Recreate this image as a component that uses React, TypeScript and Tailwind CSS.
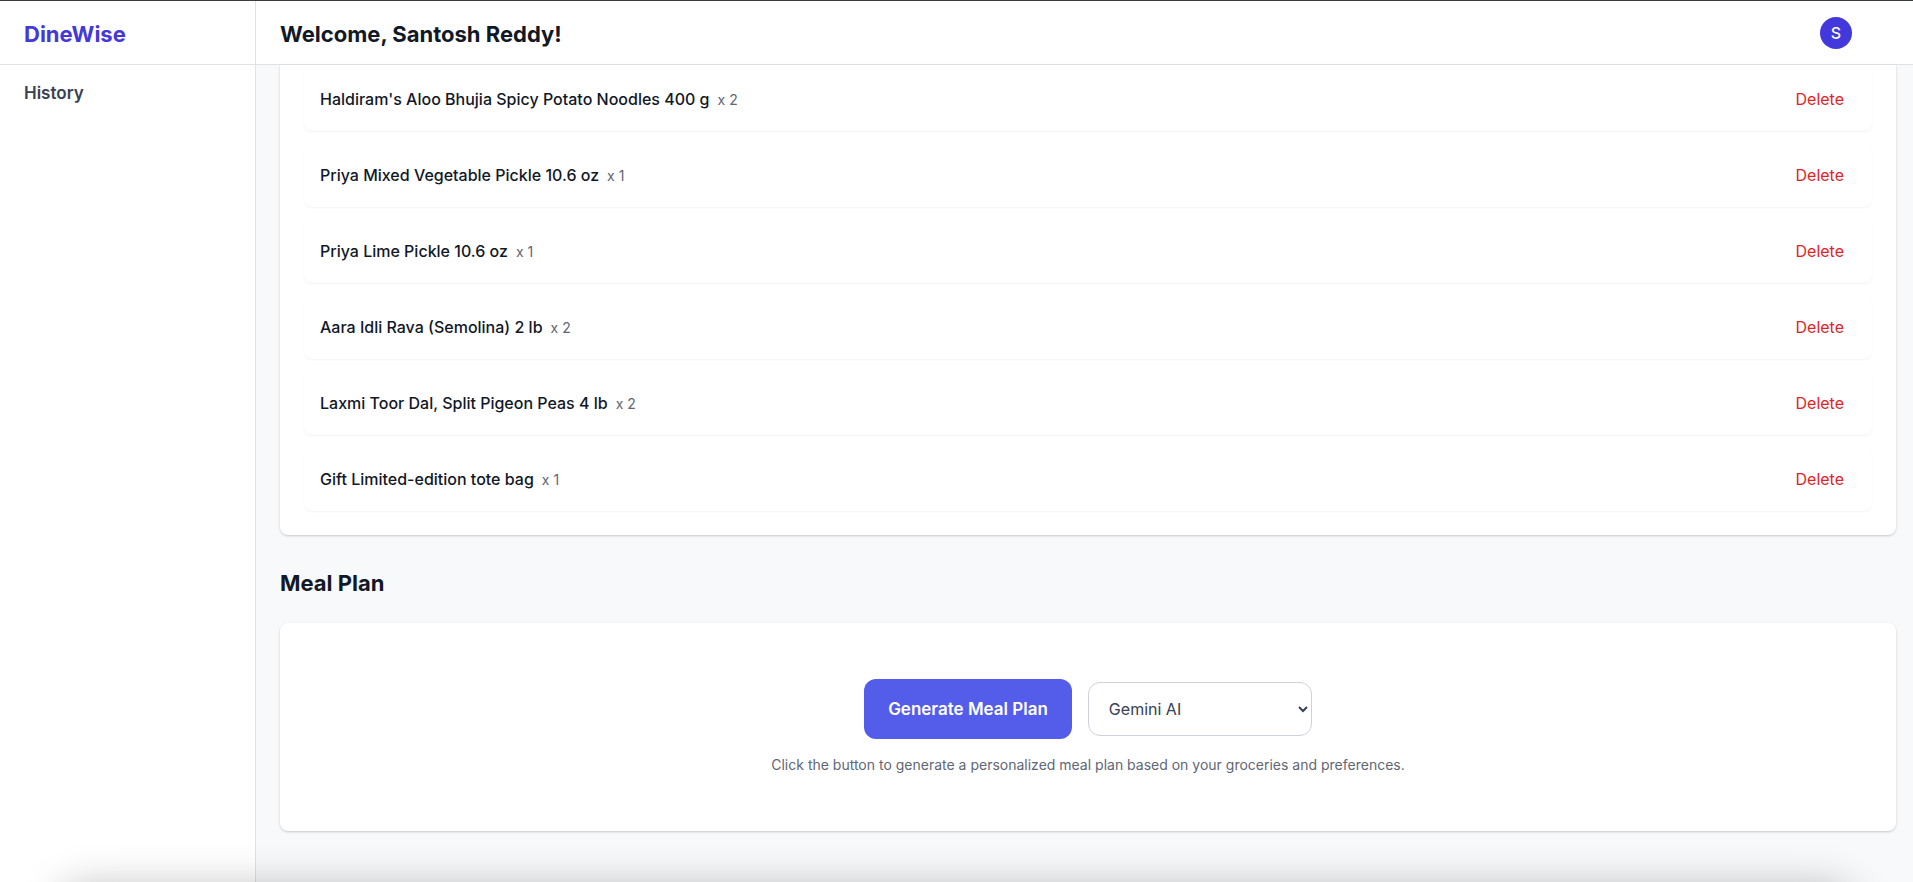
type Grocery = { name: string; quantity: number };

const groceries: Grocery[] = [
  { name: "Haldiram's Aloo Bhujia Spicy Potato Noodles 400 g", quantity: 2 },
  { name: "Priya Mixed Vegetable Pickle 10.6 oz", quantity: 1 },
  { name: "Priya Lime Pickle 10.6 oz", quantity: 1 },
  { name: "Aara Idli Rava (Semolina) 2 lb", quantity: 2 },
  { name: "Laxmi Toor Dal, Split Pigeon Peas 4 lb", quantity: 2 },
  { name: "Gift Limited-edition tote bag", quantity: 1 },
];

function Sidebar() {
  return (
    <aside className="flex w-64 shrink-0 flex-col border-r border-[#dfe1e7] bg-white">
      <div className="flex h-16 items-center border-b border-[#dfe1e7] px-6 pt-0.5">
        <a href="#" className="text-[22px] leading-8 font-bold text-[#4338dc]">
          DineWise
        </a>
      </div>
      <nav className="px-6 py-4">
        <a href="#history" className="block text-[17px] leading-6 font-semibold text-[#374151]">
          History
        </a>
      </nav>
    </aside>
  );
}

function Header() {
  return (
    <header className="flex h-16 items-center justify-between border-b border-[#dfe1e7] bg-white pr-[61px] pl-6">
      <h1 className="pt-0.5 text-[22px] leading-8 font-bold text-[#111827]">Welcome, Santosh Reddy!</h1>
      <button
        type="button"
        aria-label="Account"
        className="flex size-8 items-center justify-center rounded-full bg-[#4338dc] text-base font-medium text-white"
      >
        S
      </button>
    </header>
  );
}

function GroceryRow({ item }: { item: Grocery }) {
  return (
    <li className="flex items-center justify-between rounded-lg bg-white p-4 shadow-[0_1px_2px_rgba(0,0,0,0.05)]">
      <div className="flex items-baseline gap-2">
        <span className="text-base font-medium text-[#111827]">{item.name}</span>
        <span className="text-sm text-[#5f6675]">x {item.quantity}</span>
      </div>
      <button type="button" className="px-3 py-1 text-base text-[#dc2626]">
        Delete
      </button>
    </li>
  );
}

function MealPlan() {
  return (
    <section className="mt-8">
      <h2 className="mb-6 text-[22px] leading-8 font-bold text-[#111827]">Meal Plan</h2>
      <div className="flex flex-col items-center gap-4 rounded-lg bg-white py-14 shadow-[0_1px_3px_rgba(0,0,0,0.1),0_1px_2px_rgba(0,0,0,0.1)]">
        <div className="flex items-center gap-4">
          <button
            type="button"
            className="rounded-xl bg-[#535de9] px-6 py-4 text-[17px] leading-7 font-semibold text-white"
          >
            Generate Meal Plan
          </button>
          <select
            aria-label="AI model"
            className="h-[54px] w-56 rounded-xl border border-[#cfd2da] bg-white px-4 text-base text-[#374151]"
          >
            <option>Gemini AI</option>
          </select>
        </div>
        <p className="text-sm text-[#5f6675]">
          Click the button to generate a personalized meal plan based on your groceries and preferences.
        </p>
      </div>
    </section>
  );
}

export default function App() {
  return (
    <div className="relative flex min-h-screen border-t border-[#3a3d40] bg-[#f8f9fb] font-['Inter',sans-serif]">
      <Sidebar />
      <div className="flex min-w-0 flex-1 flex-col">
        <Header />
        <main className="flex-1 pr-[17px] pb-12 pl-6">
          <ul className="flex flex-col gap-3 rounded-b-lg bg-white px-6 pt-0.5 pb-6 shadow-[0_1px_3px_rgba(0,0,0,0.1),0_1px_2px_rgba(0,0,0,0.1)]">
            {groceries.map((item) => (
              <GroceryRow key={item.name} item={item} />
            ))}
          </ul>
          <MealPlan />
        </main>
      </div>
      <div aria-hidden="true" className="pointer-events-none absolute inset-x-0 bottom-0 h-16 overflow-hidden">
        <div className="mx-16 mt-[72px] h-16 rounded-xl shadow-[0_0_44px_rgba(0,0,0,0.3)]" />
      </div>
    </div>
  );
}
